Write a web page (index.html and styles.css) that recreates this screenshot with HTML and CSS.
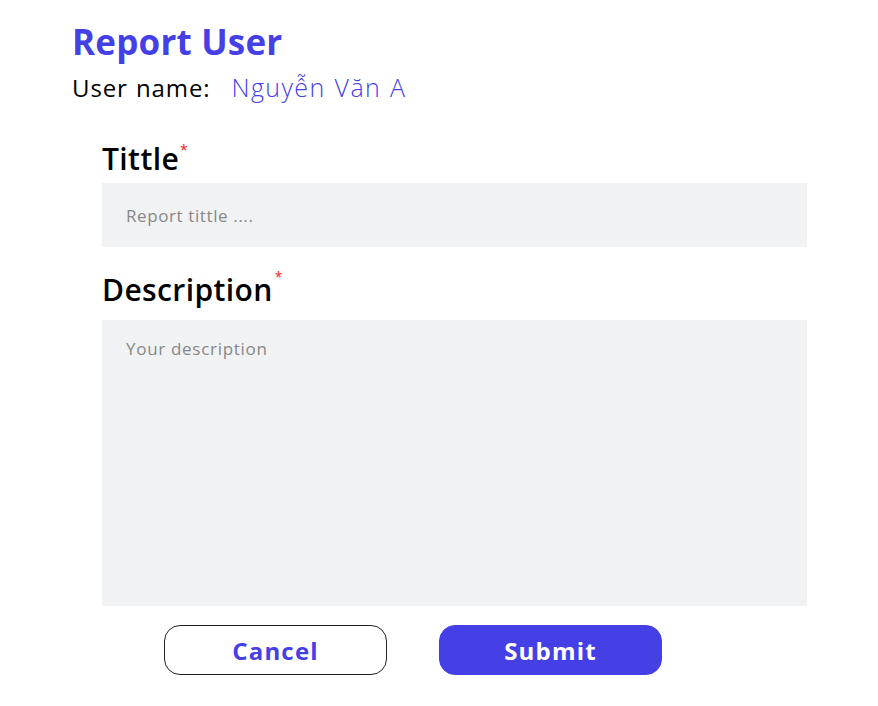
FILE: index.html
```html
<!DOCTYPE html>
<html>
<head>
<meta charset="utf-8">
<link rel="stylesheet" href="styles.css">
</head>
<body>
<div class="page">
  <h1 class="title">Report User</h1>
  <div class="user-row">
    <span class="user-label">User name:</span>
    <span class="user-value">Nguyễn Văn A</span>
  </div>
  <form class="form">
    <label class="field-label">Tittle<span class="req">*</span></label>
    <div class="input">Report tittle ....</div>
    <label class="field-label desc-label">Description<span class="req req-high">*</span></label>
    <div class="textarea">Your description</div>
    <div class="actions">
      <button type="button" class="btn btn-cancel">Cancel</button>
      <button type="button" class="btn btn-submit">Submit</button>
    </div>
  </form>
</div>
</body>
</html>
```
FILE: styles.css
```css
* { box-sizing: border-box; }
body {
  margin: 0;
  background: #ffffff;
  font-family: "Open Sans", "Noto Sans", sans-serif;
  color: #000;
}
.page {
  padding: 18px 0 0 72px;
}
.title {
  margin: 0;
  font-size: 35px;
  font-weight: 700;
  color: #4540e6;
  line-height: 48px;
  letter-spacing: 0.2px;
}
.user-row {
  display: flex;
  align-items: baseline;
  gap: 21px;
  margin-top: 6px;
  line-height: 30px;
}
.user-label {
  font-size: 24px;
  font-weight: 500;
  letter-spacing: 0.9px;
  word-spacing: 1px;
}
.user-value {
  font-size: 25px;
  font-weight: 300;
  color: #4540e6;
  letter-spacing: 1.4px;
  word-spacing: 1px;
}
.form {
  margin: 38px 0 0 30px;
  width: 705px;
  display: flex;
  flex-direction: column;
}
.field-label {
  font-size: 30px;
  font-weight: 600;
  line-height: 36px;
  display: block;
  margin-bottom: 6px;
  letter-spacing: 0.4px;
}
.req {
  color: #ff2020;
  font-size: 14px;
  line-height: 0;
  vertical-align: 15px;
  font-weight: 400;
  margin-left: 1px;
}
.req-high {
  vertical-align: 19px;
  margin-left: 2px;
}
.input {
  height: 64px;
  background: #f1f2f4;
  color: #888888;
  font-size: 17px;
  letter-spacing: 0.6px;
  padding: 0 24px;
  display: flex;
  align-items: center;
}
.desc-label {
  margin-top: 25px;
  margin-bottom: 12px;
}
.textarea {
  height: 286px;
  background: #f1f2f4;
  color: #888888;
  font-size: 17px;
  letter-spacing: 0.7px;
  padding: 17px 24px;
}
.actions {
  display: flex;
  gap: 52px;
  margin: 19px 0 0 62px;
}
.btn {
  width: 223px;
  height: 50px;
  border-radius: 16px;
  font-family: inherit;
  font-size: 24px;
  font-weight: 700;
  letter-spacing: 1.2px;
  cursor: pointer;
  padding: 0;
}
.btn-cancel {
  background: #fff;
  border: 1px solid #222;
  color: #4540e6;
}
.btn-submit {
  background: #4540e6;
  border: 1px solid #4540e6;
  color: #fff;
}
```
